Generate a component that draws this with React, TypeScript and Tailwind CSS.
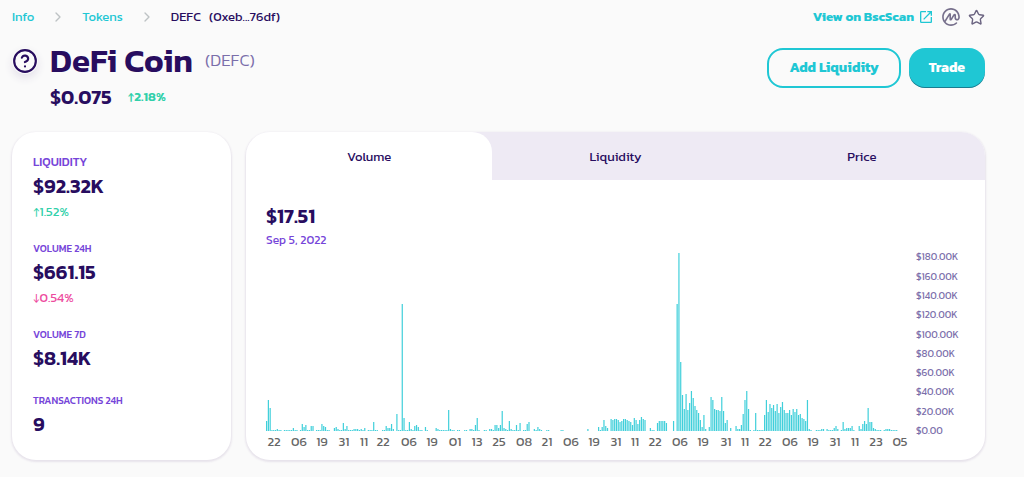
import { ChevronRight, CircleHelp, Star } from 'lucide-react';
import { MdOpenInNew } from 'react-icons/md';
import { SiCoinmarketcap } from 'react-icons/si';
import clsx from 'clsx';

type Trend = 'up' | 'down';

interface Stat {
  readonly label: string;
  readonly value: string;
  readonly change?: string;
  readonly trend?: Trend;
  readonly large?: boolean;
}

const STATS: readonly Stat[] = [
  { label: 'LIQUIDITY', value: '$92.32K', change: '1.52%', trend: 'up', large: true },
  { label: 'VOLUME 24H', value: '$661.15', change: '0.54%', trend: 'down' },
  { label: 'VOLUME 7D', value: '$8.14K' },
  { label: 'TRANSACTIONS 24H', value: '9' },
];

const TABS = ['Volume', 'Liquidity', 'Price'];

// Daily volume as runs: [first day, heights of the consecutive days]
const RUNS: ReadonlyArray<readonly [number, readonly number[]]> = [
  [0, [10, 31, 23, 1, 1, 1, 2, 1, 1]],
  [10, [1, 1, 1, 1, 1, 3, 1, 1]],
  [19, [1, 7, 4, 6, 1, 1, 5, 5]],
  [28, [1, 1, 1, 7, 5, 4, 1, 1]],
  [38, [3, 4, 2, 1, 1, 8, 2, 5, 1, 1, 1, 2, 2, 2, 1, 2, 1, 3]],
  [57, [1, 1, 1, 9, 1, 1]],
  [65, [1, 1, 5, 3, 3, 7, 2]],
  [73, [17, 1, 1, 127, 13, 1, 1, 9, 2, 1, 5, 6, 4, 1, 1]],
  [89, [4, 1]],
  [95, [3, 2, 1, 1, 1, 1, 1, 21, 2, 1, 1]],
  [107, [1, 1]],
  [111, [1, 1]],
  [114, [2, 2, 1, 6, 13, 1]],
  [122, [1, 1]],
  [125, [2, 2, 1, 6, 6, 3, 6, 20, 3, 2, 1, 10, 2, 1, 1, 6, 1, 8]],
  [144, [1, 1, 7, 9]],
  [150, [2, 1, 4, 2, 1]],
  [157, [1, 1]],
  [165, [1, 1]],
  [180, [2]],
  [186, [4, 1, 4, 11, 5, 3]],
  [193, [12, 11, 12, 12, 11, 9, 10, 12, 12, 11, 10, 9, 6, 13, 11, 7, 11, 14, 12, 11]],
  [215, [3, 1, 1]],
  [219, [8, 10, 10, 10, 10, 8]],
  [228, [10]],
  [230, [127, 178, 69, 36, 22, 37, 21, 28, 40, 33, 25, 21, 18, 11, 4, 16, 2]],
  [248, [4, 34, 31, 22, 21, 21, 20, 34, 20, 8, 11]],
  [260, [3]],
  [263, [5, 2, 2, 6, 17, 31, 40, 22, 1]],
  [273, [1, 18, 1, 1, 1, 1]],
  [279, [16, 31, 19, 27, 23, 26, 20, 27, 18, 24, 29, 21, 18, 18, 21, 16, 22, 19, 22, 16, 17, 13, 12, 10, 31, 2, 1]],
  [308, [1, 1, 1, 2, 2]],
  [314, [2, 1, 1, 1, 3, 5, 2]],
  [322, [1, 9, 2, 3, 3, 3, 5, 1]],
  [332, [5, 2, 7, 10, 7, 23, 9, 9, 3, 2, 1, 1, 1]],
  [346, [1, 2, 2, 2, 1, 1, 1, 1]],
];

const BARS = RUNS.flatMap(([start, heights]) =>
  heights.map((height, i) => ({ day: start + i, height })),
);

const DAY_WIDTH = 1.785;
const BASELINE = 181;

const X_TICKS: ReadonlyArray<readonly [number, string]> = [
  [8, '22'], [33, '06'], [56, '19'], [78, '31'], [98, '11'], [117, '22'], [143, '06'],
  [166, '19'], [189, '01'], [211, '13'], [233, '25'], [258, '08'], [281, '21'], [305, '06'],
  [328, '19'], [350, '31'], [369, '11'], [389, '22'], [414, '06'], [437, '19'], [460, '31'],
  [479, '11'], [499, '22'], [524, '06'], [547, '19'], [569, '31'], [589, '11'], [610, '23'],
  [634, '05'],
];

const Y_TICKS = [
  '$0.00', '$20.00K', '$40.00K', '$60.00K', '$80.00K',
  '$100.00K', '$120.00K', '$140.00K', '$160.00K', '$180.00K',
];

function Change({ trend, children, className }: { trend: Trend; children: string; className?: string }) {
  return (
    <span className={clsx(trend === 'up' ? 'text-[#31d0aa]' : 'text-[#ed4b9e]', className)}>
      {trend === 'up' ? '↑' : '↓'}
      {children}
    </span>
  );
}

function Breadcrumbs() {
  return (
    <nav aria-label="Breadcrumb" className="flex items-center text-[13px] text-[#1fc7d4]">
      <a href="#info">Info</a>
      <ChevronRight size={16} className="mx-4 text-[#bdc2c4]" />
      <a href="#tokens">Tokens</a>
      <ChevronRight size={16} className="mx-4 text-[#bdc2c4]" />
      <span className="flex gap-2 text-[#280d5f]">
        <span>DEFC</span>
        <span>(0xeb...76df)</span>
      </span>
    </nav>
  );
}

function StatsCard() {
  return (
    <dl className="flex w-[219px] shrink-0 flex-col rounded-3xl bg-white px-[21px] pt-5 shadow-[0_1px_2px_1px_#e7e3eb]">
      {STATS.map((stat) => (
        <div key={stat.label} className={stat.change ? 'pb-4' : 'pb-5'}>
          <dt
            className={clsx(
              'font-medium text-[#7645d9]',
              stat.large ? 'text-xs leading-5' : 'text-[10px] leading-[18px]',
            )}
          >
            {stat.label}
          </dt>
          <dd className="text-xl leading-7 font-semibold text-[#280d5f]">{stat.value}</dd>
          {stat.change && stat.trend && (
            <dd className="flex h-6 items-end pb-1 text-[13px] leading-4">
              <Change trend={stat.trend}>{stat.change}</Change>
            </dd>
          )}
        </div>
      ))}
    </dl>
  );
}

function VolumeChart() {
  return (
    <svg viewBox="0 -6 699 208" className="-mt-2 block h-auto w-full" role="img" aria-label="Daily volume">
      {BARS.map(({ day, height }) => (
        <rect
          key={day}
          x={day * DAY_WIDTH}
          y={BASELINE - height}
          width={1.2}
          height={height}
          fill="#1fc7d4"
          fillOpacity={0.85}
        />
      ))}
      {X_TICKS.map(([x, label]) => (
        <text key={x} x={x} y={196} textAnchor="middle" fontSize={13} fill="#666666">
          {label}
        </text>
      ))}
      {Y_TICKS.map((label, i) => (
        <text key={label} x={650} y={184 - i * 19.3} fontSize={10} fill="#7a6eaa">
          {label}
        </text>
      ))}
    </svg>
  );
}

function ChartCard() {
  return (
    <section className="min-w-0 flex-1 overflow-hidden rounded-3xl bg-white shadow-[0_1px_2px_1px_#e7e3eb]">
      <div role="tablist" className="grid grid-cols-3 bg-[#eeeaf4]">
        {TABS.map((tab, i) => (
          <button
            key={tab}
            type="button"
            role="tab"
            aria-selected={i === 0}
            className={clsx(
              'h-12 pt-0.5 text-[13px] text-[#280d5f]',
              i === 0 && 'rounded-tr-[20px] bg-white',
            )}
          >
            {tab}
          </button>
        ))}
      </div>
      <div className="px-5 pt-6 pb-2">
        <p className="text-xl leading-6 font-semibold text-[#280d5f]">$17.51</p>
        <p className="text-xs leading-6 text-[#7645d9]">Sep 5, 2022</p>
        <VolumeChart />
      </div>
    </section>
  );
}

export default function App() {
  return (
    <main className="min-h-screen bg-[#fafafa] pt-[7px] pr-[39px] pb-4 pl-3 font-[Kanit,Inter,sans-serif]">
      <div className="flex h-5 items-center justify-between">
        <Breadcrumbs />
        <div className="flex items-center gap-2 text-[#7a6eaa]">
          <a href="#bscscan" className="flex items-center gap-1 text-[13px] font-bold text-[#1fc7d4]">
            View on BscScan
            <MdOpenInNew size={16} />
          </a>
          <a href="#coinmarketcap" aria-label="CoinMarketCap">
            <SiCoinmarketcap size={18} className="text-[#77708c]" />
          </a>
          <button type="button" aria-label="Add to watchlist">
            <Star size={17} className="text-[#6b6481]" />
          </button>
        </div>
      </div>

      <header className="flex justify-between pt-4">
        <div>
          <div className="flex h-9 items-center">
            <CircleHelp size={26} className="rounded-full text-[#280d5f] shadow-[0_4px_8px_#e4e1ea]" />
            <h1 className="ml-3 text-[33px] leading-9 font-semibold text-[#280d5f]">DeFi Coin</h1>
            <span className="ml-3 text-[17px] font-light text-[#7a6eaa]">(DEFC)</span>
          </div>
          <div className="flex h-9 items-center gap-4 pl-[38px]">
            <span className="text-xl font-semibold text-[#280d5f]">$0.075</span>
            <Change trend="up" className="text-[13px] font-semibold">
              2.18%
            </Change>
          </div>
        </div>
        <div className="flex gap-2 pt-[5px]">
          <button
            type="button"
            className="h-10 rounded-2xl border-2 border-[#1fc7d4] px-5 text-sm font-bold text-[#1fc7d4]"
          >
            Add Liquidity
          </button>
          <button
            type="button"
            className="h-10 rounded-2xl bg-[#1fc7d4] px-5 text-sm font-bold text-white shadow-[inset_0_-1px_0_#0e0e2c66]"
          >
            Trade
          </button>
        </div>
      </header>

      <div className="mt-[17px] flex gap-[15px]">
        <StatsCard />
        <ChartCard />
      </div>
    </main>
  );
}
